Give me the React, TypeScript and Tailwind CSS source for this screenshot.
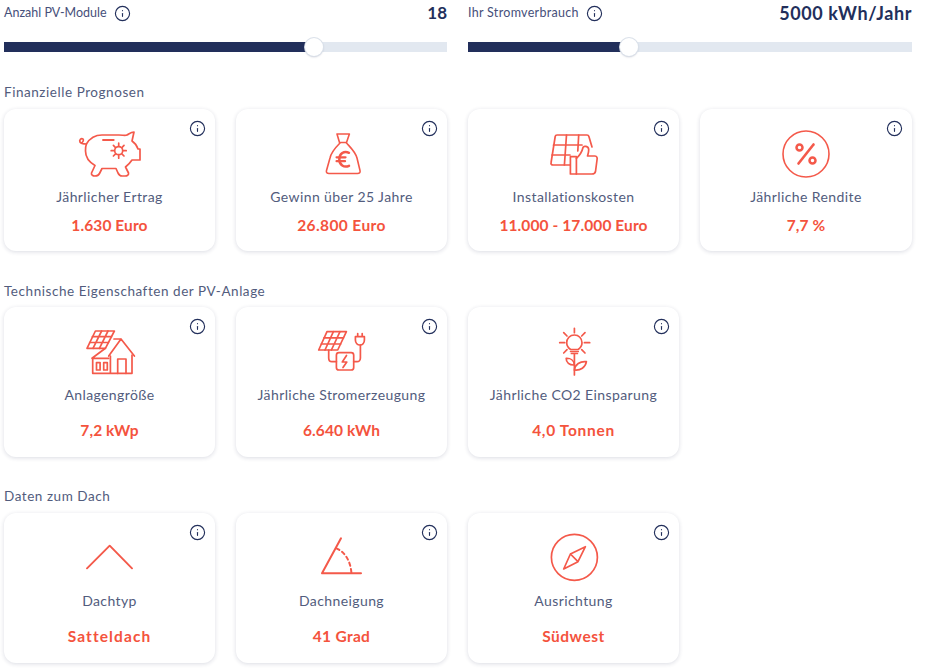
import React from "react";
import { Info } from "lucide-react";

const Ic = ({ children, sw = 1.6 }: { children: React.ReactNode; sw?: number }) => (
  <svg viewBox="0 0 70 50" width="70" height="50" fill="none" stroke="#f4594a" strokeWidth={sw} strokeLinecap="round" strokeLinejoin="round">
    {children}
  </svg>
);

const Pig = () => (
  <Ic sw={1.7}>
    <path d="M11.4 14 C15 8 21 5 27 5 H44 C48 5 50 6 52 5 C54 4 56 2 59 2 L57 11 C60 13 62 16 63 19 H65 V30 H57 C55 33 53 35 50.5 37 L53.5 43 C54 45 52 46 50 46 H47 C45 46 44 45 43 43 L41 38.5 H27 L24.5 43.5 C23.5 45.5 22 46 20 46 C18 46 16 45 16.5 43 L20 35.5 C14 32 10.5 27 10.5 21 C10.5 18 10.6 16 11.4 14 Z" />
    <path d="M11.4 14 C9 14 6 14 5 12 C4 10 6 8 8 9 C9 10 8 12 6.5 13" />
    <path d="M28 10 H38.7" strokeWidth="1.9" />
    <circle cx="43.7" cy="20.7" r="4" />
    <path d="M43.7 13.2V15.8 M43.7 25.6V28.2 M36.2 20.7H38.8 M48.6 20.7H51.2 M38.4 15.4L40.3 17.3 M47.1 24.1L49 26 M38.4 26L40.3 24.1 M47.1 17.3L49 15.4" />
  </Ic>
);
const Bag = () => (
  <Ic>
    <path d="M30 4 H42.4 L39.5 12.5 H32.5 Z" />
    <path d="M33 13 C28 18 24 23 23 28 L19.5 40.5 C19 42.5 20 43.5 22 43.5 H50.5 C52.5 43.5 53.5 42.5 53 40.5 L50 28 C48.5 22 44 18 39.5 13" />
    <path d="M42 22.8 C37 20.6 32.3 23.5 32.3 29.3 C32.3 35 37 38 42 35.8" strokeWidth="2.5" />
    <path d="M29.6 27.3 H38.5 M29.6 31.2 H38" strokeWidth="2.3" />
  </Ic>
);
const PanelThumb = () => (
  <Ic sw={1.7}>
    <path d="M31 35 H14 C12.5 35 11.8 34 12 33 L16.2 6.5 C16.4 5.5 17 5 18 5 H48 C49 5 49.6 5.5 49.9 6.5 L53 17" />
    <path d="M14.5 15 H43 M13 25 H31 M27.5 5 L25.4 35 M39.7 5 L38.8 21" />
    <rect x="31.4" y="26.7" width="6" height="17.3" />
    <path d="M37.4 28.5 C41 25 43 22 44 17.5 C44.5 15.5 49.5 16 49.7 19.5 C49.8 22 49 24 48.5 26 H56 C58 26 58.5 28 58 30 L56.5 41.5 C56 43.5 55 44 53 44 H37.4" />
  </Ic>
);
const Percent = () => (
  <Ic>
    <circle cx="35" cy="24" r="23" />
    <circle cx="28.5" cy="17.5" r="3" strokeWidth="2.5" />
    <circle cx="41.5" cy="30.5" r="3" strokeWidth="2.5" />
    <path d="M42.5 14.5 L27.5 33.5" strokeWidth="2.6" />
  </Ic>
);
const House = () => (
  <Ic sw={1.7}>
    <path d="M20.4 5 H39.4 L30.4 22.3 H12 Z" />
    <path d="M17.4 10.7 H36.4 M14.7 16.5 H33.4 M26.6 5 L18 22.3 M33 5 L24.4 22.3" />
    <path d="M39 13 H46 L59.4 30 M46 13 L33.7 30 M30.4 22.3 L17 32.3 H33.7" />
    <path d="M17.7 32.3 V47.3 H57 V29 M35.4 30 V47.3" />
    <rect x="21.5" y="36.6" width="3.6" height="7.4" />
    <rect x="28.7" y="36.6" width="3.6" height="7.4" />
    <path d="M42.7 47.3 V33 H51 V47.3" />
  </Ic>
);
const SolarPlug = () => (
  <Ic sw={1.7}>
    <path d="M20 5.7 H39.4 L30.7 24 H11.7 Z" />
    <path d="M17 11.8 H36.5 M14.3 18 H33.6 M26.4 5.7 L18 24 M33 5.7 L24.4 24" />
    <path d="M21.7 24 V32 C21.7 34.5 23 35.7 25 35.7 H29.4" />
    <rect x="29.4" y="26.7" width="17.3" height="17.3" rx="2.5" />
    <path d="M39.5 29.5 L35.3 36 H39.8 L36 41.5" />
    <path d="M46.7 35.7 H50 C52 35.7 53.4 34 53.4 32 V19" />
    <path d="M48.4 10.7 H57.4 V14 C57.4 17 55.5 19 53 19 C50.5 19 48.4 17 48.4 14 Z M50.7 7.5 V10.7 M55.2 7.5 V10.7" />
  </Ic>
);
const Flower = () => (
  <Ic sw={1.7}>
    <path d="M31.6 23.5 C29.5 22 27.7 19.7 27.7 16.7 C27.7 12.4 31 9 35.4 9 C39.8 9 43 12.4 43 16.7 C43 19.7 41.2 22 39.2 23.5 Z" />
    <path d="M35.4 2.3 V6.7 M20.7 16.7 H25.7 M45.4 16.7 H50.7 M24.7 6.7 L28 10 M46 6.7 L42.7 10 M24.7 27 L28 23.7 M46 27 L42.7 23.7" />
    <path d="M31.6 25.5 H39.2 M32.4 27.5 H38.4" />
    <path d="M35.4 28 V49" />
    <path d="M35.4 39 C35 34.5 31.5 32 27.2 32.3 C27 36.5 30.5 39.3 35.4 39 Z" />
    <path d="M35.4 44 C36 38.5 41 35 47.4 35.7 C46.5 41.5 41.5 44.7 35.4 44 Z" />
  </Ic>
);
const Roof = () => (
  <Ic><path d="M12 35.3 L34.7 12.7 L57 35.3" strokeWidth="1.9" /></Ic>
);
const Angle = () => (
  <Ic>
    <path d="M34 5.3 L15 40.3 H54" strokeWidth="2" />
    <path d="M29.4 15.3 C37 18.5 43.5 27 44.4 40" strokeWidth="2" strokeDasharray="3.4 3.2" />
  </Ic>
);
const Compass = () => (
  <Ic sw={1.7}>
    <circle cx="35.4" cy="24.3" r="23" />
    <path d="M46.4 13.7 L31.4 21 L24.7 36 L39 28.7 Z M31.4 21 L39 28.7" />
  </Ic>
);

const ff = "font-['Lato','Noto_Sans',sans-serif]";

const Slider = ({ label, labelCls = "", value, valueCls, fill }: { label: string; labelCls?: string; value: string; valueCls: string; fill: string }) => (
  <div className="flex flex-col">
    <div className="flex items-center justify-between h-[26px]">
      <div className={`flex items-center gap-[7px] text-[12.5px] text-[#46507a] ${labelCls}`}>
        {label}
        <Info size={17} strokeWidth={1.6} color="#222f5b" />
      </div>
      <div className={`${valueCls} font-bold text-[#222f5b]`}>{value}</div>
    </div>
    <div className="mt-[16px] h-[10px] bg-[#e2e8f0]">
      <div className={`h-full bg-[#222f5b] ${fill}`} />
    </div>
  </div>
);

const Card = ({ icon, label, value, gap1, gap2, h, vt = "tracking-[0.1px]" }: { icon: React.ReactNode; label: string; value: string; gap1: string; gap2: string; h: string; vt?: string }) => (
  <div className={`relative flex flex-col items-center rounded-xl bg-white shadow-[0_1px_4px_rgba(30,40,80,0.16)] ${h}`}>
    <div className="absolute right-[9px] top-[11px]">
      <Info size={17} strokeWidth={1.6} color="#222f5b" />
    </div>
    {icon}
    <div className={`${gap1} text-[14px] leading-5 tracking-[0.4px] text-[#525c7d]`}>{label}</div>
    <div className={`${gap2} ${vt} text-[15.5px] leading-5 font-bold text-[#f4533d]`}>{value}</div>
  </div>
);

const Section = ({ title, mt, mb = "mb-[7px]", children }: { title: string; mt: string; mb?: string; children: React.ReactNode }) => (
  <section className={mt}>
    <h2 className={`text-[13.5px] leading-5 tracking-[0.55px] font-normal text-[#525c7d] ${mb}`}>{title}</h2>
    <div className="grid grid-cols-[211px_211px_211px_212px] gap-x-[21px]">{children}</div>
  </section>
);

export default function App() {
  return (
    <div className={`${ff} w-[925px] h-[671px] overflow-hidden bg-white pl-[4px] relative`}>
      <div className="grid grid-cols-[443px_444px] gap-x-[21px]">
        <Slider label="Anzahl PV-Module" value="18" valueCls="text-[17px]" fill="w-[68.5%]" />
        <Slider label="Ihr Stromverbrauch" labelCls="tracking-[0.3px]" value="5000 kWh/Jahr" valueCls="text-[18px] tracking-[0.6px]" fill="w-[36%]" />
      </div>
      <div className="absolute left-[305px] top-[38px] w-[18px] h-[18px] rounded-full bg-white shadow-[0_0_0_1px_#dbe1ea,0_1px_2px_rgba(30,40,80,0.3)]" />
      <div className="absolute left-[620px] top-[38px] w-[18px] h-[18px] rounded-full bg-white shadow-[0_0_0_1px_#dbe1ea,0_1px_2px_rgba(30,40,80,0.3)]" />

      <Section title="Finanzielle Prognosen" mt="mt-[30px]">
        <Card h="h-[142px] pt-[21px]" gap1="mt-[7px]" gap2="mt-[8px]" icon={<Pig />} label="Jährlicher Ertrag" value="1.630 Euro" />
        <Card h="h-[142px] pt-[21px]" gap1="mt-[7px]" gap2="mt-[8px]" icon={<Bag />} label="Gewinn über 25 Jahre" value="26.800 Euro" vt="tracking-[0.4px]" />
        <Card h="h-[142px] pt-[21px]" gap1="mt-[7px]" gap2="mt-[8px]" icon={<PanelThumb />} label="Installationskosten" value="11.000 - 17.000 Euro" />
        <Card h="h-[142px] pt-[21px]" gap1="mt-[7px]" gap2="mt-[8px]" icon={<Percent />} label="Jährliche Rendite" value="7,7 %" />
      </Section>

      <Section title="Technische Eigenschaften der PV-Anlage" mt="mt-[30px]" mb="mb-[6px]">
        <Card h="h-[150px] pt-[19px]" gap1="mt-[9px]" gap2="mt-[15px]" icon={<House />} label="Anlagengröße" value="7,2 kWp" />
        <Card h="h-[150px] pt-[19px]" gap1="mt-[9px]" gap2="mt-[15px]" icon={<SolarPlug />} label="Jährliche Stromerzeugung" value="6.640 kWh" />
        <Card h="h-[150px] pt-[19px]" gap1="mt-[9px]" gap2="mt-[15px]" icon={<Flower />} label="Jährliche CO2 Einsparung" value="4,0 Tonnen" vt="tracking-[0.7px]" />
      </Section>

      <Section title="Daten zum Dach" mt="mt-[29px]">
        <Card h="h-[150px] pt-[20px]" gap1="mt-[8px]" gap2="mt-[15px]" icon={<Roof />} label="Dachtyp" value="Satteldach" vt="tracking-[1.1px]" />
        <Card h="h-[150px] pt-[20px]" gap1="mt-[8px]" gap2="mt-[15px]" icon={<Angle />} label="Dachneigung" value="41 Grad" vt="tracking-[0.3px]" />
        <Card h="h-[150px] pt-[20px]" gap1="mt-[8px]" gap2="mt-[15px]" icon={<Compass />} label="Ausrichtung" value="Südwest" vt="tracking-[0.5px]" />
      </Section>
    </div>
  );
}
